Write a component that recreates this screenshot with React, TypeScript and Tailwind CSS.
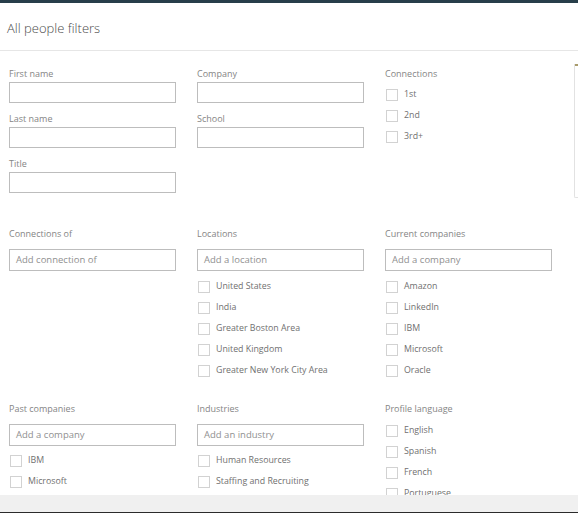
import React from "react";

const font = { fontFamily: '"Open Sans", "Noto Sans", Arial, sans-serif' };

function Label({ children, className = "" }: { children: React.ReactNode; className?: string }) {
  return (
    <div className={`h-[12px] text-[9px] leading-[12px] text-[#858585] whitespace-nowrap ${className}`}>
      {children}
    </div>
  );
}

function TextInput({ placeholder = "", h = "h-[21px]" }: { placeholder?: string; h?: string }) {
  return (
    <div
      className={`${h} w-[167px] border border-[#bdbdbd] bg-white flex items-center pl-[6px] text-[9.5px] text-[#909090] whitespace-nowrap`}
    >
      {placeholder}
    </div>
  );
}

function Check({ label }: { label: string }) {
  return (
    <div className="h-[21px] flex items-center">
      <div className="w-[12px] h-[12px] border border-[#d2d2d2] bg-white ml-[1px] shrink-0" />
      <span className="ml-[6px] text-[8.8px] text-[#707070] whitespace-nowrap">{label}</span>
    </div>
  );
}

function Field({ label }: { label: string }) {
  return (
    <div className="flex flex-col">
      <Label className="mb-[2px]">{label}</Label>
      <TextInput />
    </div>
  );
}

export default function App() {
  return (
    <div style={font} className="w-[578px] h-[513px] bg-white flex flex-col overflow-hidden relative">
      <div className="h-[3px] bg-[#283e4a] shrink-0" />
      <div className="h-[47px] shrink-0 flex items-center pl-[7px] pt-[4px] text-[13px] font-light text-[#4a4a4a]">
        All people filters
      </div>
      <div className="h-px bg-[#e6e6e6] shrink-0" />

      <div className="flex-1 overflow-hidden pl-[9px] pt-[17px] relative">
        {/* Section 1 */}
        <div className="grid grid-cols-[167px_167px_167px] gap-x-[21px] items-start">
          <div className="flex flex-col gap-[10px]">
            <Field label="First name" />
            <Field label="Last name" />
            <Field label="Title" />
          </div>
          <div className="flex flex-col gap-[10px]">
            <Field label="Company" />
            <Field label="School" />
          </div>
          <div className="flex flex-col">
            <Label className="mb-[4px]">Connections</Label>
            <Check label="1st" />
            <Check label="2nd" />
            <Check label="3rd+" />
          </div>
        </div>

        {/* Section 2 */}
        <div className="grid grid-cols-[167px_167px_167px] gap-x-[21px] items-start mt-[35px]">
          <div className="flex flex-col">
            <Label className="mb-[9px]">Connections of</Label>
            <TextInput placeholder="Add connection of" h="h-[22px]" />
          </div>
          <div className="flex flex-col">
            <Label className="mb-[9px]">Locations</Label>
            <TextInput placeholder="Add a location" h="h-[22px]" />
            <div className="mt-[5px] flex flex-col">
              <Check label="United States" />
              <Check label="India" />
              <Check label="Greater Boston Area" />
              <Check label="United Kingdom" />
              <Check label="Greater New York City Area" />
            </div>
          </div>
          <div className="flex flex-col">
            <Label className="mb-[9px]">Current companies</Label>
            <TextInput placeholder="Add a company" h="h-[22px]" />
            <div className="mt-[5px] flex flex-col">
              <Check label="Amazon" />
              <Check label="LinkedIn" />
              <Check label="IBM" />
              <Check label="Microsoft" />
              <Check label="Oracle" />
            </div>
          </div>
        </div>

        {/* Section 3 */}
        <div className="grid grid-cols-[167px_167px_167px] gap-x-[21px] items-start mt-[22px]">
          <div className="flex flex-col">
            <Label className="mb-[9px]">Past companies</Label>
            <TextInput placeholder="Add a company" h="h-[22px]" />
            <div className="mt-[4px] flex flex-col">
              <Check label="IBM" />
              <Check label="Microsoft" />
            </div>
          </div>
          <div className="flex flex-col">
            <Label className="mb-[9px]">Industries</Label>
            <TextInput placeholder="Add an industry" h="h-[22px]" />
            <div className="mt-[4px] flex flex-col">
              <Check label="Human Resources" />
              <Check label="Staffing and Recruiting" />
            </div>
          </div>
          <div className="flex flex-col">
            <Label className="mb-[5px]">Profile language</Label>
            <Check label="English" />
            <Check label="Spanish" />
            <Check label="French" />
            <Check label="Portuguese" />
          </div>
        </div>

        <div className="absolute right-0 top-[13px] w-[4px] h-[134px] border-l border-b border-[#e2e2e2] rounded-bl-[2px]">
          <div className="w-[3px] h-[2px] bg-[#a99b6b]" />
        </div>
      </div>

      <div className="h-[17px] bg-[#f0f0f0] shrink-0" />
      <div className="h-px bg-[#2b2b2b] shrink-0" />
    </div>
  );
}
